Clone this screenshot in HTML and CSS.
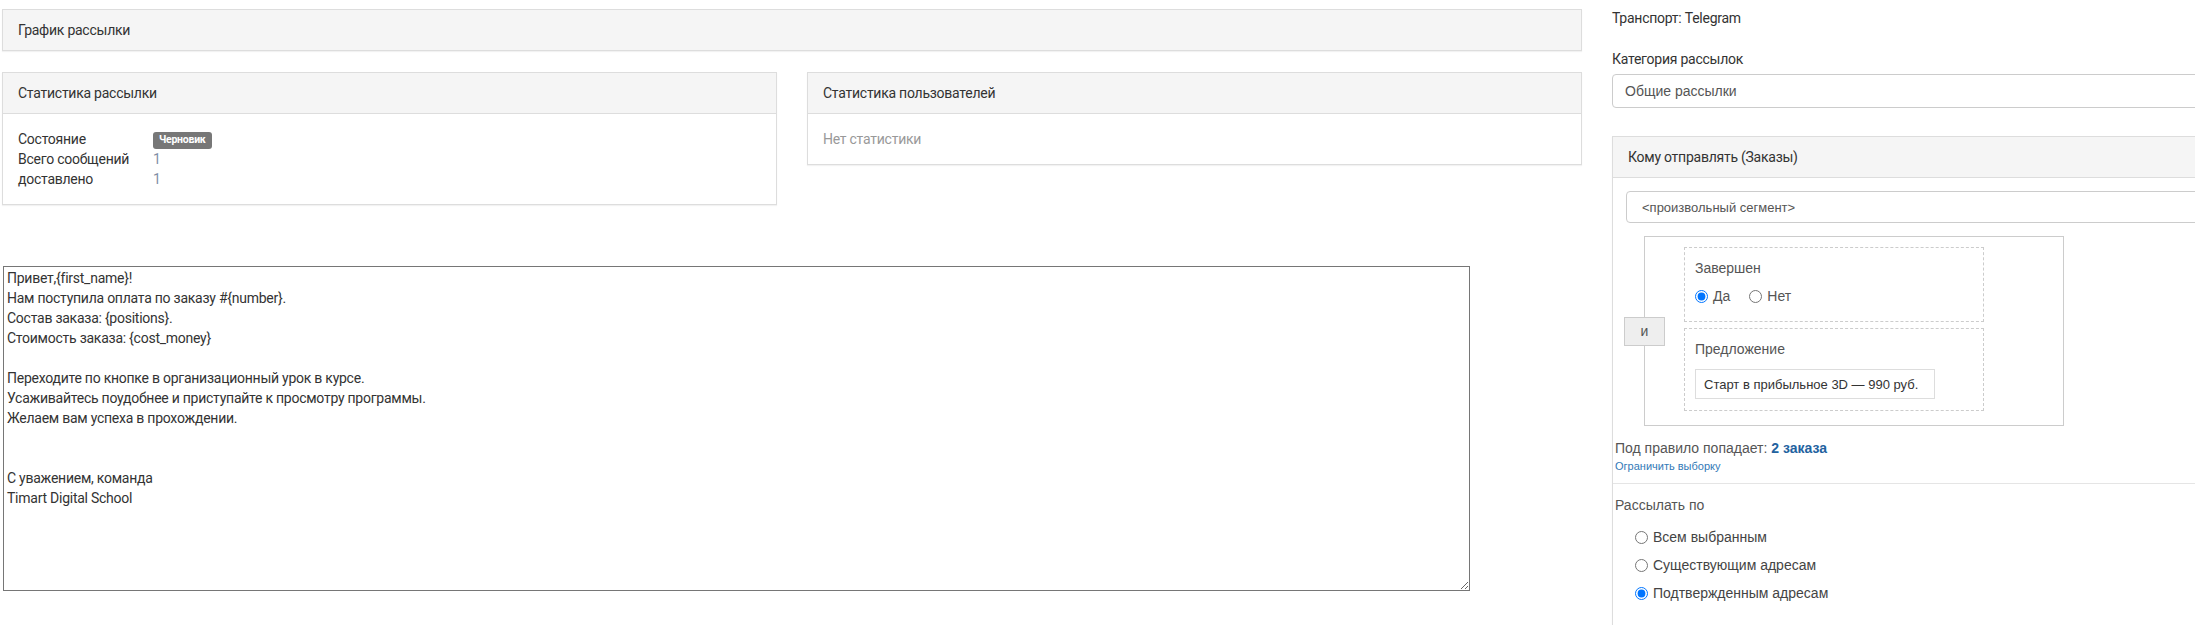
FILE: index.html
```html
<!DOCTYPE html>
<html>
<head>
  <meta charset="utf-8">
  <title>Рассылка</title>
  <link rel="stylesheet" href="styles.css">
</head>
<body>

<div class="page">

  <div class="main-col">

    <div class="panel schedule">
      <div class="panel-heading">График рассылки</div>
    </div>

    <div class="stats-row">
      <div class="panel stats">
        <div class="panel-heading">Статистика рассылки</div>
        <div class="panel-body">
          <table class="stat-table">
            <tr>
              <td>Состояние</td>
              <td><span class="label-draft">Черновик</span></td>
            </tr>
            <tr>
              <td>Всего сообщений</td>
              <td class="num">1</td>
            </tr>
            <tr>
              <td>доставлено</td>
              <td class="num">1</td>
            </tr>
          </table>
        </div>
      </div>

      <div class="panel stats">
        <div class="panel-heading">Статистика пользователей</div>
        <div class="panel-body">
          <span class="muted">Нет статистики</span>
        </div>
      </div>
    </div>

    <textarea class="message">Привет,{first_name}!
Нам поступила оплата по заказу #{number}.
Состав заказа: {positions}.
Стоимость заказа: {cost_money}

Переходите по кнопке в организационный урок в курсе.
Усаживайтесь поудобнее и приступайте к просмотру программы.
Желаем вам успеха в прохождении.


С уважением, команда
Timart Digital School</textarea>

  </div>

  <div class="side-col">

    <div class="transport">Транспорт: Telegram</div>

    <label class="field-label" for="category">Категория рассылок</label>
    <select id="category" class="form-control">
      <option>Общие рассылки</option>
    </select>

    <div class="panel recipients">
      <div class="panel-heading">Кому отправлять (Заказы)</div>

      <div class="panel-body">
        <select class="form-control segment">
          <option>&lt;произвольный сегмент&gt;</option>
        </select>

        <div class="rule">
          <button class="and-btn">и</button>
          <div class="rule-box">
            <div class="condition">
              <div class="cond-title">Завершен</div>
              <div class="cond-radios">
                <label><input type="radio" name="done" checked>Да</label>
                <label><input type="radio" name="done">Нет</label>
              </div>
            </div>
            <div class="condition">
              <div class="cond-title">Предложение</div>
              <div class="offer">Старт в прибыльное 3D — 990 руб.</div>
            </div>
          </div>
        </div>

        <div class="match-count">Под правило попадает: <b>2 заказа</b></div>
        <a class="limit-link" href="#">Ограничить выборку</a>
      </div>

      <div class="panel-section">
        <div class="section-title">Рассылать по</div>
        <label class="radio-row"><input type="radio" name="send">Всем выбранным</label>
        <label class="radio-row"><input type="radio" name="send">Существующим адресам</label>
        <label class="radio-row"><input type="radio" name="send" checked>Подтвержденным адресам</label>
      </div>
    </div>

  </div>

</div>

</body>
</html>
```

FILE: styles.css
```css
html, body {
  margin: 0;
  overflow: hidden;
}

body {
  font-family: Roboto, "Liberation Sans", sans-serif;
  font-size: 14px;
  line-height: 20px;
  letter-spacing: -0.25px;
  color: #333;
  background: #fff;
}

.page {
  display: flex;
  align-items: flex-start;
  gap: 30px;
  padding: 9px 0 0 2px;
  width: 2600px;
}

.main-col {
  width: 1580px;
  flex: none;
}

.side-col {
  width: 900px;
  flex: none;
}

/* panels */

.panel {
  background: #fff;
  border: 1px solid #ddd;
  box-shadow: 0 1px 1px rgba(0, 0, 0, .05);
  margin-bottom: 21px;
}

.panel-heading {
  background: #f5f5f5;
  border-bottom: 1px solid #ddd;
  padding: 10px 15px;
}

.schedule .panel-heading {
  border-bottom: 0;
}

.panel-body {
  padding: 15px;
}

.stats-row {
  display: flex;
  align-items: flex-start;
  gap: 30px;
  margin-bottom: 61px;
}

.stats-row .panel {
  width: 775px;
  box-sizing: border-box;
  margin-bottom: 0;
}

.stat-table {
  border-collapse: collapse;
  border-spacing: 0;
}

.stat-table td {
  padding: 0;
  height: 20px;
}

.stat-table td:first-child {
  width: 135px;
}

.stat-table .num {
  color: #7f8fa6;
}

.label-draft {
  display: inline-block;
  background: #777;
  color: #fff;
  font-size: 10.5px;
  font-weight: bold;
  line-height: 1;
  padding: 3px 6px 3px;
  border-radius: 3px;
  vertical-align: 1px;
}

.muted {
  color: #999;
}

.message {
  display: block;
  box-sizing: border-box;
  width: 1467px;
  height: 325px;
  margin: 0 0 0 1px;
  padding: 1px 3px;
  border: 1px solid #767676;
  font-family: Roboto, "Liberation Sans", sans-serif;
  font-size: 14px;
  line-height: 20px;
  letter-spacing: -0.25px;
  color: #333;
}

/* right column */

.transport {
  margin-top: -1px;
}

.field-label {
  display: block;
  margin: 21px 0 5px;
}

.form-control {
  display: block;
  box-sizing: border-box;
  width: 100%;
  height: 34px;
  padding: 0 12px;
  border: 1px solid #ccc;
  border-radius: 4px;
  background: #fff;
  font-family: "Liberation Sans", Arial, sans-serif;
  font-size: 14px;
  letter-spacing: 0;
  color: #555;
  -webkit-appearance: none;
  appearance: none;
}

.recipients {
  margin-top: 28px;
}

.recipients .panel-body {
  padding: 13px 10px 9px 2px;
  font-family: "Liberation Sans", Arial, sans-serif;
  letter-spacing: 0;
  color: #555;
}

.form-control.segment {
  margin-left: 11px;
  width: calc(100% - 3px);
  height: 32px;
  font-size: 13px;
  padding-left: 15px;
  margin-bottom: 13px;
}

.rule {
  display: flex;
  align-items: center;
  margin-left: 9px;
}

.and-btn {
  position: relative;
  z-index: 1;
  width: 41px;
  height: 29px;
  margin-right: -21px;
  padding: 0;
  border: 1px solid #ccc;
  background: #eee;
  font-family: "Liberation Sans", Arial, sans-serif;
  font-size: 14px;
  letter-spacing: 0;
  color: #555;
}

.rule-box {
  box-sizing: border-box;
  width: 420px;
  height: 190px;
  border: 1px solid #ccc;
  padding: 10px 0 0 39px;
}

.condition {
  box-sizing: border-box;
  width: 300px;
  border: 1px dashed #ccc;
  padding: 10px 10px 0;
}

.condition:first-child {
  height: 75px;
  margin-bottom: 6px;
}

.condition:last-child {
  height: 83px;
}

.cond-radios {
  margin-top: 8px;
  display: flex;
  gap: 19px;
}

.cond-radios label,
.radio-row {
  display: flex;
  align-items: center;
  gap: 5px;
}

input[type="radio"] {
  margin: 0;
  width: 13px;
  height: 13px;
}

.offer {
  box-sizing: border-box;
  width: 240px;
  height: 30px;
  margin-top: 10px;
  border: 1px solid #ddd;
  padding: 5px 8px 4px;
  font-size: 13px;
  white-space: nowrap;
  color: #333;
}

.match-count {
  margin-top: 12px;
}

.match-count b {
  color: #23629f;
}

.limit-link {
  display: block;
  font-size: 11px;
  line-height: 16px;
  color: #337ab7;
  text-decoration: none;
}

.panel-section {
  border-top: 1px solid #e5e5e5;
  padding: 11px 10px 40px 2px;
  font-family: "Liberation Sans", Arial, sans-serif;
  letter-spacing: 0;
  color: #555;
}

.section-title {
  margin-bottom: 12px;
}

.radio-row {
  padding-left: 20px;
  margin-bottom: 8px;
  color: #444;
}
```
